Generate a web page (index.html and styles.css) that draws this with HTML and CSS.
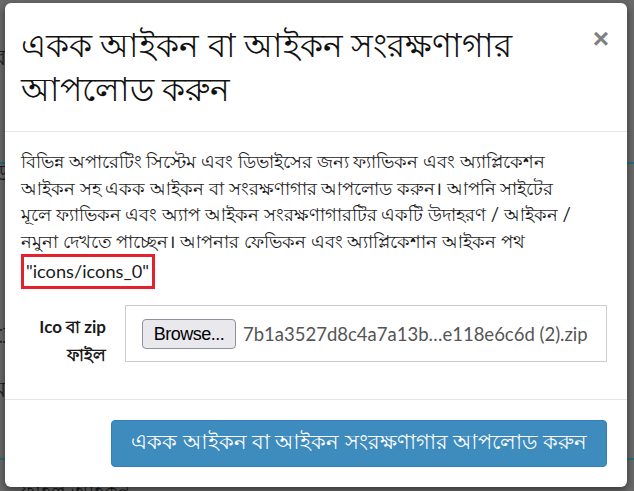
FILE: index.html
```html
<!DOCTYPE html>
<html lang="bn">
<head>
<meta charset="utf-8">
<title>আপলোড</title>
<link rel="stylesheet" href="styles.css">
</head>
<body>
<div class="page-behind">
  <span class="behind-char c1">ব</span>
  <span class="behind-line l1"></span>
  <span class="behind-char c2">ড</span>
  <span class="behind-char c3">া</span>
  <span class="behind-char c4">ম</span>
  <span class="behind-line l2"></span>
  <span class="behind-text">ফাইল আইকন</span>
</div>
<div class="modal">
  <div class="modal-header">
    <h4 class="modal-title">একক আইকন বা আইকন সংরক্ষণাগার আপলোড করুন</h4>
    <button class="close" type="button">×</button>
  </div>
  <div class="modal-body">
    <p class="intro">বিভিন্ন অপারেটিং সিস্টেম এবং ডিভাইসের জন্য ফ্যাভিকন এবং অ্যাপ্লিকেশন<br>আইকন সহ একক আইকন বা সংরক্ষণাগার আপলোড করুন। আপনি সাইটের<br>মূলে ফ্যাভিকন এবং অ্যাপ আইকন সংরক্ষণাগারটির একটি উদাহরণ / আইকন /<br>নমুনা দেখতে পাচ্ছেন। আপনার ফেভিকন এবং অ্যাপ্লিকেশান আইকন পথ<br><span class="path">"icons/icons_0"</span></p>
    <div class="form-row">
      <label class="form-label">Ico বা zip ফাইল</label>
      <div class="file-input">
        <span class="browse">Browse...</span>
        <span class="file-name">7b1a3527d8c4a7a13b…e118e6c6d (2).zip</span>
      </div>
    </div>
  </div>
  <div class="modal-footer">
    <button class="btn-primary" type="button">একক আইকন বা আইকন সংরক্ষণাগার আপলোড করুন</button>
  </div>
</div>
</body>
</html>
```
FILE: styles.css
```css
* { box-sizing: border-box; }
html, body {
  margin: 0;
  height: 491px;
  overflow: hidden;
}
body {
  background: #6a6a6a;
  font-family: Lato, "Noto Sans", sans-serif;
  color: #1a1a1a;
  position: relative;
  padding: 3px 0 0 5px;
}
.page-behind {
  position: absolute;
  inset: 0;
  color: #1a1a1a;
  font-size: 22px;
}
.behind-char { position: absolute; left: -6px; }
.c1 { top: 40px; }
.c2 { top: 155px; }
.c3 { top: 318px; }
.c4 { top: 372px; }
.behind-line { position: absolute; left: 0; right: 0; height: 2px; background: #1f6f80; }
.l1 { top: 162px; }
.l2 { top: 458px; }
.behind-text { position: absolute; left: 20px; top: 476px; font-size: 20px; }

.modal {
  position: relative;
  width: 622px;
  background: #fff;
  border-radius: 6px;
  box-shadow: 0 3px 9px rgba(0,0,0,0.5);
}
.modal-header {
  display: flex;
  align-items: flex-start;
  padding: 20px 16px 20px 16px;
  border-bottom: 1px solid #e5e5e5;
}
.modal-title {
  flex: 1;
  margin: 0;
  font-size: 32.5px;
  font-weight: normal;
  line-height: 44px;
  color: #111;
  padding-right: 40px;
}
.close {
  border: 0;
  background: none;
  padding: 0;
  margin: 2px 2px 0 0;
  font-family: "Liberation Sans", sans-serif;
  font-size: 28px;
  font-weight: bold;
  line-height: 28px;
  color: #808080;
}
.modal-body {
  padding: 16px 20px 30px 16px;
}
.intro {
  margin: 0 0 16px;
  font-size: 18.4px;
  line-height: 26.5px;
  white-space: nowrap;
}
.path {
  display: inline-block;
  border: 3px solid #e3222b;
  padding: 2px 3px 2px 2px;
  font-size: 18.2px;
  line-height: 25px;
  margin-top: 0;
}
.form-row {
  display: grid;
  grid-template-columns: 85px 1fr;
  column-gap: 19px;
}
.form-label {
  text-align: right;
  font-weight: bold;
  font-size: 17px;
  line-height: 28px;
  padding-top: 8px;
}
.file-input {
  height: 57px;
  border: 1px solid #ccc;
  display: flex;
  align-items: center;
  padding: 0 16px;
  gap: 7px;
}
.browse {
  height: 30px;
  width: 94px;
  border: 1px solid #8f8f9d;
  border-radius: 4px;
  background: #e9e9ed;
  font-size: 18px;
  line-height: 28px;
  text-align: center;
  color: #000;
  font-family: "Liberation Sans", sans-serif;
  letter-spacing: -0.5px;
}
.file-name {
  font-size: 18.5px;
  color: #555;
  white-space: nowrap;
}
.modal-footer {
  border-top: 1px solid #e5e5e5;
  padding: 20px 20px 20px 16px;
  display: flex;
  justify-content: flex-end;
}
.btn-primary {
  width: 496px;
  height: 47px;
  border: 1px solid #357ebd;
  border-radius: 4px;
  background: #3e8bbd;
  color: #fff;
  font-family: Lato, "Noto Sans", sans-serif;
  font-size: 21px;
}
```
